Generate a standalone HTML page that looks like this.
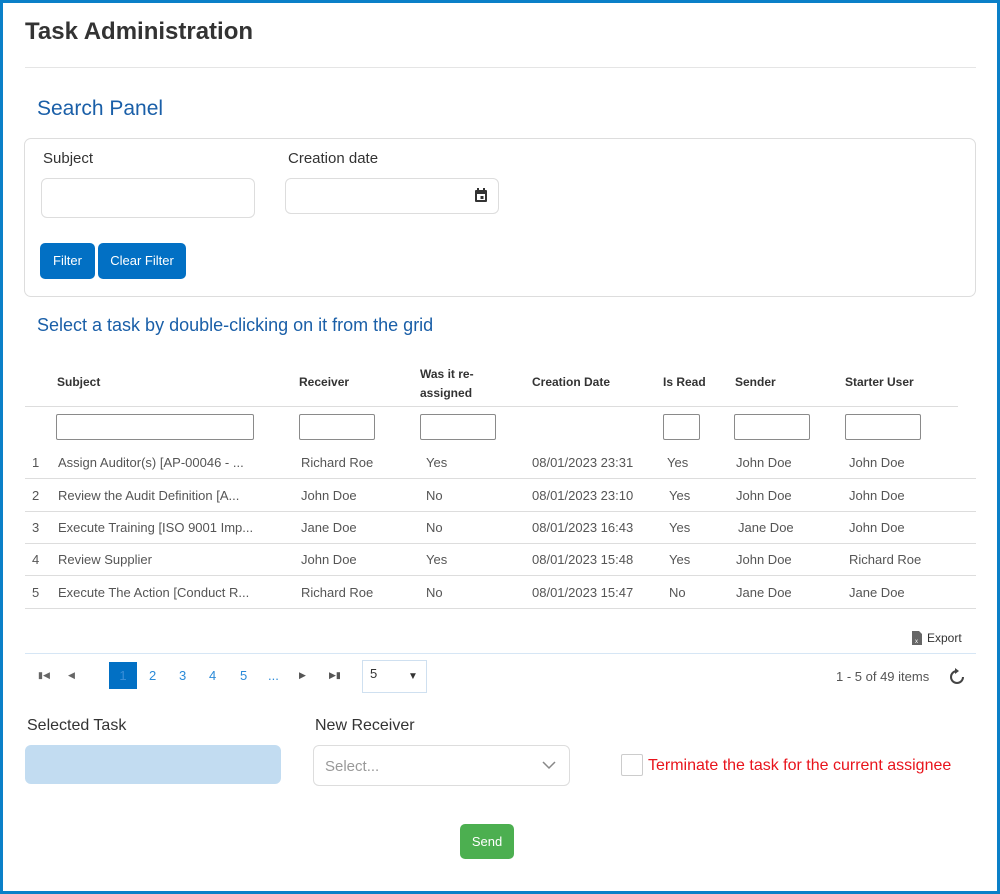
<!DOCTYPE html>
<html><head><style>
*{box-sizing:border-box;margin:0;padding:0}
body{width:1000px;height:894px;position:relative;font-family:"Liberation Sans",sans-serif;background:#fff;overflow:hidden}
.frame{position:absolute;left:0;top:0;width:1000px;height:894px;border:3px solid #0b80c8;border-right-width:3px}
.a{position:absolute;white-space:nowrap}
.inp{position:absolute;border:1px solid #ddd;border-radius:6px;background:#fff}
.fi{position:absolute;border:1px solid #8a8a8a;border-radius:2px;height:26px;top:414px}
.btn{position:absolute;background:#0270c4;color:#fff;border-radius:5px;font-size:13px;text-align:center;line-height:36px;top:243px;height:36px}
.th{position:absolute;font-size:12px;font-weight:bold;color:#333;top:375px}
.row{position:absolute;left:25px;width:951px;height:33px;border-bottom:1px solid #ddd;font-size:13px;color:#555}
.row span{position:absolute;top:9px;white-space:nowrap}
.pg{position:absolute;top:668px;font-size:13px;color:#2a8ad8}
</style></head><body>
<div class="frame"></div>
<div class="a" style="left:25px;top:18px;font-size:24px;font-weight:bold;color:#333">Task Administration</div>
<div class="a" style="left:25px;top:67px;width:951px;height:1px;background:#e5e5e5"></div>
<div class="a" style="left:37px;top:97px;font-size:21px;color:#1a5fa8">Search Panel</div>
<div class="a" style="left:24px;top:138px;width:952px;height:159px;border:1px solid #ddd;border-radius:7px"></div>
<div class="a" style="left:43px;top:150px;font-size:15px;color:#333">Subject</div>
<div class="a" style="left:288px;top:150px;font-size:15px;color:#333">Creation date</div>
<div class="inp" style="left:41px;top:178px;width:214px;height:40px"></div>
<div class="inp" style="left:285px;top:178px;width:214px;height:36px"></div>
<svg class="a" style="left:474px;top:188px" width="14" height="15" viewBox="0 0 14 15"><rect x="1" y="2" width="12" height="12" rx="1" fill="#333"/><rect x="3" y="6" width="8" height="6" fill="#fff"/><rect x="6.5" y="8" width="3" height="3" fill="#333"/><rect x="3" y="0" width="2" height="3" fill="#333"/><rect x="9" y="0" width="2" height="3" fill="#333"/></svg>
<div class="btn" style="left:40px;width:55px">Filter</div>
<div class="btn" style="left:98px;width:88px">Clear Filter</div>
<div class="a" style="left:37px;top:315px;font-size:18px;color:#1a5fa8">Select a task by double-clicking on it from the grid</div>
<div class="th" style="left:57px">Subject</div>
<div class="th" style="left:299px">Receiver</div>
<div class="th" style="left:420px;top:365px;line-height:19px">Was it re-<br>assigned</div>
<div class="th" style="left:532px">Creation Date</div>
<div class="th" style="left:663px">Is Read</div>
<div class="th" style="left:735px">Sender</div>
<div class="th" style="left:845px">Starter User</div>
<div class="a" style="left:25px;top:406px;width:933px;height:1px;background:#ddd"></div>
<div class="fi" style="left:56px;width:198px"></div>
<div class="fi" style="left:299px;width:76px"></div>
<div class="fi" style="left:420px;width:76px"></div>
<div class="fi" style="left:663px;width:37px"></div>
<div class="fi" style="left:734px;width:76px"></div>
<div class="fi" style="left:845px;width:76px"></div>
<div class="row" style="top:446px"><span style="left:7px">1</span><span style="left:33px">Assign Auditor(s) [AP-00046 - ...</span><span style="left:276px">Richard Roe</span><span style="left:401px">Yes</span><span style="left:507px">08/01/2023 23:31</span><span style="left:642px">Yes</span><span style="left:711px">John Doe</span><span style="left:824px">John Doe</span></div>
<div class="row" style="top:479px"><span style="left:7px">2</span><span style="left:33px">Review the Audit Definition [A...</span><span style="left:276px">John Doe</span><span style="left:401px">No</span><span style="left:507px">08/01/2023 23:10</span><span style="left:644px">Yes</span><span style="left:711px">John Doe</span><span style="left:824px">John Doe</span></div>
<div class="row" style="top:511px"><span style="left:7px">3</span><span style="left:33px">Execute Training [ISO 9001 Imp...</span><span style="left:276px">Jane Doe</span><span style="left:401px">No</span><span style="left:507px">08/01/2023 16:43</span><span style="left:644px">Yes</span><span style="left:713px">Jane Doe</span><span style="left:824px">John Doe</span></div>
<div class="row" style="top:543px"><span style="left:7px">4</span><span style="left:33px">Review Supplier</span><span style="left:276px">John Doe</span><span style="left:401px">Yes</span><span style="left:507px">08/01/2023 15:48</span><span style="left:644px">Yes</span><span style="left:711px">John Doe</span><span style="left:824px">Richard Roe</span></div>
<div class="row" style="top:576px"><span style="left:7px">5</span><span style="left:33px">Execute The Action [Conduct R...</span><span style="left:276px">Richard Roe</span><span style="left:401px">No</span><span style="left:507px">08/01/2023 15:47</span><span style="left:644px">No</span><span style="left:711px">Jane Doe</span><span style="left:824px">Jane Doe</span></div>
<svg class="a" style="left:912px;top:631px" width="10" height="14" viewBox="0 0 10 14"><path d="M0 0H7L10 3V14H0Z" fill="#666"/><text x="3" y="12" font-size="6" fill="#fff" font-family="Liberation Sans">x</text></svg>
<div class="a" style="left:927px;top:631px;font-size:12px;color:#333">Export</div>
<div class="a" style="left:25px;top:653px;width:951px;height:1px;background:#d6e6f5"></div>
<div class="a" style="left:38px;top:670px;font-size:9px;color:#666">▮◀</div>
<div class="a" style="left:68px;top:670px;font-size:9px;color:#666">◀</div>
<div class="a" style="left:109px;top:662px;width:28px;height:27px;background:#0270c4;color:#3b8fd8;font-size:13px;text-align:center;line-height:27px">1</div>
<div class="pg" style="left:149px">2</div><div class="pg" style="left:179px">3</div><div class="pg" style="left:209px">4</div><div class="pg" style="left:240px">5</div><div class="pg" style="left:268px">...</div>
<div class="a" style="left:299px;top:670px;font-size:9px;color:#555">▶</div>
<div class="a" style="left:329px;top:670px;font-size:9px;color:#555">▶▮</div>
<div class="a" style="left:362px;top:660px;width:65px;height:33px;border:1px solid #cfe0f0"></div>
<div class="a" style="left:370px;top:666px;font-size:13px;color:#333">5</div>
<div class="a" style="left:408px;top:671px;font-size:10px;color:#333">▼</div>
<div class="a" style="left:836px;top:669px;font-size:13px;color:#555">1 - 5 of 49 items</div>
<svg class="a" style="left:949px;top:668px" width="16" height="17" viewBox="0 0 16 17"><path d="M8 3A6 6 0 1 0 14 9" fill="none" stroke="#444" stroke-width="2"/><path d="M6 0L10 3L6 6Z" fill="#444"/></svg>
<div class="a" style="left:27px;top:717px;font-size:16px;color:#333">Selected Task</div>
<div class="a" style="left:315px;top:717px;font-size:16px;color:#333">New Receiver</div>
<div class="a" style="left:25px;top:745px;width:256px;height:39px;background:#c2dcf1;border-radius:6px"></div>
<div class="inp" style="left:313px;top:745px;width:257px;height:41px"></div>
<div class="a" style="left:325px;top:758px;font-size:15px;color:#999">Select...</div>
<svg class="a" style="left:542px;top:761px" width="14" height="9" viewBox="0 0 14 9"><path d="M1 1L7 7L13 1" fill="none" stroke="#888" stroke-width="1.5"/></svg>
<div class="a" style="left:621px;top:754px;width:22px;height:22px;border:1px solid #ccc;border-radius:2px"></div>
<div class="a" style="left:648px;top:757px;font-size:16px;color:#e8141c">Terminate the task for the current assignee</div>
<div class="a" style="left:460px;top:824px;width:54px;height:35px;background:#4caf50;border-radius:5px;color:#fff;font-size:13px;text-align:center;line-height:35px">Send</div>
</body></html>
